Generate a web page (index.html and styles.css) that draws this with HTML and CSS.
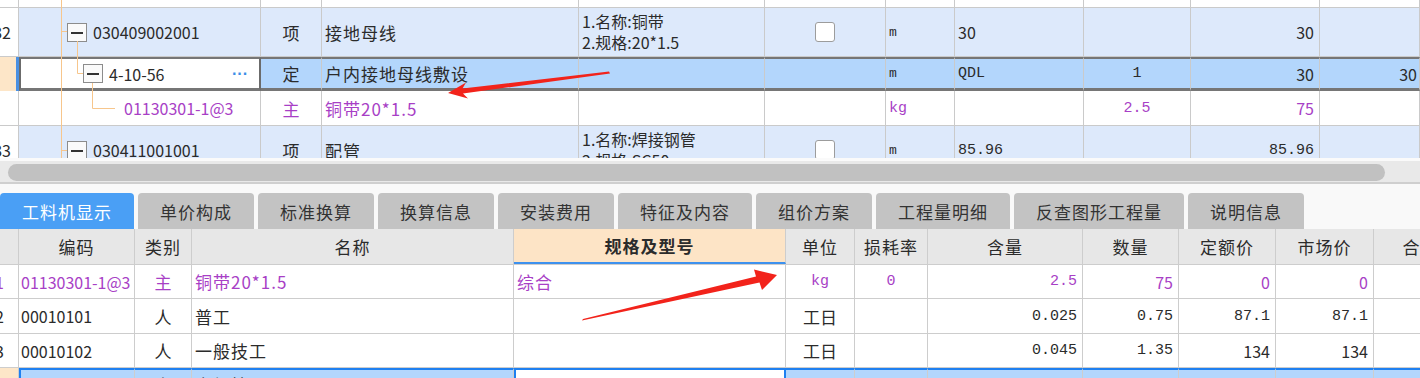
FILE: index.html
```html
<!DOCTYPE html>
<html lang="zh-CN">
<head>
    <meta charset="UTF-8">
    <meta name="viewport" content="width=device-width, initial-scale=1.0">
    <title>分部分项 - 工料机显示</title>
    <link rel="stylesheet" href="styles.css">
</head>
<body>
    <!-- upper grid: bill items -->
    <div class="grid-top">
        <div class="trow stub">
            <div></div><div></div><div></div><div></div><div></div><div></div><div></div><div></div><div></div><div></div><div></div>
        </div>

        <div class="trow item">
            <div class="c-no">32</div>
            <div class="c-code lv1"><span class="fold"></span>030409002001</div>
            <div class="c-type">项</div>
            <div class="c-name">接地母线</div>
            <div class="c-feat">1.名称:铜带<br>2.规格:20*1.5</div>
            <div class="c-check"><span class="checkbox"></span></div>
            <div class="c-unit">m</div>
            <div class="c-expr">30</div>
            <div class="c-mid"></div>
            <div class="c-num">30</div>
            <div class="c-num"></div>
        </div>

        <div class="trow sel">
            <div class="c-no"></div>
            <div class="c-code lv2"><span class="fold"></span>4-10-56<span class="more">···</span></div>
            <div class="c-type">定</div>
            <div class="c-name">户内接地母线敷设</div>
            <div class="c-feat"></div>
            <div class="c-check"></div>
            <div class="c-unit">m</div>
            <div class="c-expr mono">QDL</div>
            <div class="c-mid mono">1</div>
            <div class="c-num">30</div>
            <div class="c-num last">30</div>
        </div>

        <div class="trow main">
            <div class="c-no"></div>
            <div class="c-code lv3 purple">01130301-1@3</div>
            <div class="c-type purple">主</div>
            <div class="c-name purple">铜带20*1.5</div>
            <div class="c-feat"></div>
            <div class="c-check"></div>
            <div class="c-unit mono purple">kg</div>
            <div class="c-expr"></div>
            <div class="c-mid mono purple">2.5</div>
            <div class="c-num purple">75</div>
            <div class="c-num"></div>
        </div>

        <div class="trow item">
            <div class="c-no">33</div>
            <div class="c-code lv1"><span class="fold"></span>030411001001</div>
            <div class="c-type">项</div>
            <div class="c-name">配管</div>
            <div class="c-feat">1.名称:焊接钢管<br>2.规格:SC50</div>
            <div class="c-check"><span class="checkbox"></span></div>
            <div class="c-unit">m</div>
            <div class="c-expr mono">85.96</div>
            <div class="c-mid"></div>
            <div class="c-num mono">85.96</div>
            <div class="c-num"></div>
        </div>

        <svg class="tree-lines" width="261" height="158" viewBox="0 0 261 158">
            <g stroke="#f7c68c" stroke-width="1" fill="none">
                <path d="M61.5 0V158"/>
                <path d="M61 31.5H67"/>
                <path d="M77.5 41V73.5H83"/>
                <path d="M92.5 83V108.5H115"/>
                <path d="M61 150.5H67"/>
            </g>
        </svg>
    </div>

    <div class="hscroll"><div class="thumb"></div></div>

    <!-- detail tabs -->
    <div class="tabbar">
        <div class="tab active">工料机显示</div>
        <div class="tab">单价构成</div>
        <div class="tab">标准换算</div>
        <div class="tab">换算信息</div>
        <div class="tab">安装费用</div>
        <div class="tab">特征及内容</div>
        <div class="tab">组价方案</div>
        <div class="tab">工程量明细</div>
        <div class="tab">反查图形工程量</div>
        <div class="tab">说明信息</div>
    </div>

    <!-- lower grid: labour / material / machine -->
    <div class="grid-bottom">
        <div class="brow head">
            <div></div>
            <div>编码</div>
            <div>类别</div>
            <div>名称</div>
            <div class="spec-head">规格及型号</div>
            <div>单位</div>
            <div>损耗率</div>
            <div>含量</div>
            <div>数量</div>
            <div>定额价</div>
            <div>市场价</div>
            <div>合价</div>
        </div>

        <div class="brow r1 purple">
            <div class="b-no">1</div>
            <div class="b-code">01130301-1@3</div>
            <div class="b-mid">主</div>
            <div class="b-text">铜带20*1.5</div>
            <div class="b-text">综合</div>
            <div class="b-mid mono">kg</div>
            <div class="b-mid mono">0</div>
            <div class="b-num mono">2.5</div>
            <div class="b-num">75</div>
            <div class="b-num">0</div>
            <div class="b-num">0</div>
            <div></div>
        </div>

        <div class="brow r2">
            <div class="b-no">2</div>
            <div class="b-code">00010101</div>
            <div class="b-mid">人</div>
            <div class="b-text">普工</div>
            <div class="b-text"></div>
            <div class="b-mid">工日</div>
            <div class="b-mid"></div>
            <div class="b-num mono">0.025</div>
            <div class="b-num mono">0.75</div>
            <div class="b-num mono">87.1</div>
            <div class="b-num mono">87.1</div>
            <div></div>
        </div>

        <div class="brow r3">
            <div class="b-no">3</div>
            <div class="b-code">00010102</div>
            <div class="b-mid">人</div>
            <div class="b-text">一般技工</div>
            <div class="b-text"></div>
            <div class="b-mid">工日</div>
            <div class="b-mid"></div>
            <div class="b-num mono">0.045</div>
            <div class="b-num mono">1.35</div>
            <div class="b-num">134</div>
            <div class="b-num">134</div>
            <div></div>
        </div>

        <div class="brow bsel">
            <div class="b-no"></div>
            <div class="b-code">00010103</div>
            <div class="b-mid">人</div>
            <div class="b-text">高级技工</div>
            <div class="b-text edit"></div>
            <div class="b-mid">工日</div>
            <div class="b-mid"></div>
            <div class="b-num"></div>
            <div class="b-num"></div>
            <div class="b-num"></div>
            <div class="b-num"></div>
            <div></div>
        </div>
    </div>

    <!-- annotation arrows drawn on top of the screenshot -->
    <svg class="arrows" width="1420" height="378" viewBox="0 0 1420 378">
        <polygon fill="#f2231b" points="609,71.5 610,73.5 463,93.5 468,98.5 448,93 466,82.5 462.5,88.5"/>
        <polygon fill="#f2231b" points="582,320.5 583,319 756,276.5 754,269.5 777,275 762,290 759.5,282.5"/>
    </svg>
</body>
</html>
```

FILE: styles.css
```css
* {
    box-sizing: border-box;
}

body {
    margin: 0;
    width: 1420px;
    height: 378px;
    overflow: hidden;
    position: relative;
    background-color: #f9f9f9;
    font-family: "Noto Sans CJK SC", "Noto Sans", sans-serif;
    font-size: 16px;
    color: #2b2b2b;
}

.purple {
    color: #a83fc6;
}

.mono {
    font-family: "Liberation Mono", "DejaVu Sans Mono", monospace;
    font-size: 15px;
}

/* ---------- upper grid ---------- */

.grid-top {
    position: relative;
    height: 158px;
    overflow: hidden;
    background-color: #fff;
}

.trow {
    display: grid;
    grid-template-columns: 19px 242px 61px 257px 186px 121px 69px 129px 107px 129px 100px;
    border-bottom: 1px solid #cacaca;
}

.trow > div {
    display: flex;
    align-items: center;
    overflow: hidden;
    white-space: nowrap;
    border-right: 1px solid #cacaca;
}

.trow.stub {
    height: 8px;
}

.trow.item {
    height: 49px;
    background-color: #dde9fb;
}

.trow.main {
    height: 35px;
}

.trow.sel {
    height: 34px;
    border-bottom: none;
    background-color: #b3d6fc;
}

.trow.sel > div {
    border-top: 2px solid #767676;
    border-bottom: 3px solid #767676;
}

.trow .c-no {
    justify-content: flex-end;
    padding-right: 7px;
    background-color: #fff;
}

.trow.sel > .c-no {
    border: none;
    background-color: #fde6c8;
    box-shadow: inset -3px 0 0 #4a90e2;
}

.trow.sel > .c-code {
    background-color: #fff;
    border-left: 2px solid #6b6b6b;
    border-right: 2px solid #6b6b6b;
}

.c-code {
    font-size: 16px;
}

.c-code.lv1 {
    padding-left: 48px;
}

.c-code.lv2 {
    padding-left: 62px;
}

.c-code.lv3 {
    padding-left: 105px;
}

.fold {
    position: relative;
    width: 20px;
    height: 19px;
    margin-right: 6px;
    border: 1px solid #8c8c8c;
    background-color: #fafafa;
    flex: none;
}

.fold::before {
    content: "";
    position: absolute;
    left: 3px;
    top: 8px;
    width: 12px;
    height: 2px;
    background-color: #333;
}

.more {
    margin-left: auto;
    margin-right: 11px;
    color: #3b8ee8;
    font-family: "Liberation Sans", sans-serif;
    font-weight: bold;
    font-size: 16px;
}

.c-type {
    justify-content: center;
    font-size: 17px;
}

.c-name {
    padding-left: 3px;
    font-size: 17px;
    letter-spacing: 1px;
}

.c-feat {
    padding-left: 3px;
    font-size: 16px;
    line-height: 21px;
}

.c-check {
    justify-content: center;
}

.checkbox {
    width: 20px;
    height: 20px;
    border: 1px solid #9c9c9c;
    border-radius: 3px;
    background-color: #fff;
}

.c-unit {
    padding-left: 3px;
    font-family: "Liberation Mono", monospace;
    font-size: 13px;
}

.c-unit.purple {
    font-size: 15px;
}

.c-expr {
    padding-left: 3px;
}

.c-mid {
    justify-content: center;
}

.c-num {
    justify-content: flex-end;
    padding-right: 5px;
}

.c-num.last {
    padding-right: 2px;
}

.tree-lines {
    position: absolute;
    left: 0;
    top: 0;
    pointer-events: none;
}

/* ---------- horizontal scrollbar ---------- */

.hscroll {
    height: 26px;
    padding: 3px 35px 0 8px;
    background-color: #e9e9e9;
    border-top: 3px solid #fafafa;
    border-bottom: 2px solid #cfcfcf;
}

.thumb {
    height: 17px;
    border-radius: 9px;
    background-color: #c1c1c1;
}

/* ---------- tabs ---------- */

.tabbar {
    display: flex;
    align-items: flex-end;
    gap: 4px;
    height: 45px;
    background-color: #f9f9f9;
}

.tab {
    height: 36px;
    padding: 0 22px;
    display: flex;
    align-items: center;
    border-radius: 4px 4px 0 0;
    background-color: #c3c3c3;
    color: #333;
    font-size: 17px;
    letter-spacing: 1px;
    white-space: nowrap;
}

.tab.active {
    background-color: #4a9ff5;
    color: #fff;
}

/* ---------- lower grid ---------- */

.brow {
    display: grid;
    grid-template-columns: 19px 116px 57px 322px 272px 69px 73px 155px 96px 97px 98px 94px;
    height: 34px;
    border-bottom: 1px solid #cdcdcd;
    background-color: #fff;
}

.brow > div {
    display: flex;
    align-items: center;
    overflow: hidden;
    white-space: nowrap;
    border-right: 1px solid #cdcdcd;
}

.brow.head {
    height: 36px;
    background-color: #e7e7e7;
}

.brow.head > div {
    justify-content: center;
    font-size: 17px;
    letter-spacing: 1px;
}

.brow.head > .spec-head {
    background-color: #fde4c6;
    border-bottom: 2px solid #3d91ee;
    font-weight: bold;
}

.brow.r2 {
    height: 35px;
}

.b-no {
    justify-content: flex-end;
    padding-right: 14px;
}

.b-code {
    padding-left: 2px;
}

.b-mid {
    justify-content: center;
    font-size: 17px;
}

.b-mid.mono {
    font-size: 15px;
}

.b-text {
    padding-left: 3px;
    font-size: 17px;
    letter-spacing: 1px;
}

.b-num {
    justify-content: flex-end;
    padding-right: 5px;
}

.brow.bsel {
    height: 30px;
    border-bottom: none;
    background-color: #b3d6fc;
}

.brow.bsel > div {
    border-top: 2px solid #1f80f0;
}

.brow.bsel > .b-no {
    border-top: none;
    background-color: #fde6c8;
}

.brow.bsel > .b-code {
    border-left: 2px solid #1f80f0;
    color: transparent;
}

.brow.bsel > .edit {
    background-color: #fff;
    border-left: 2px solid #1f80f0;
    border-right: 2px solid #1f80f0;
}

/* ---------- annotation ---------- */

.arrows {
    position: absolute;
    left: 0;
    top: 0;
    pointer-events: none;
}
```
